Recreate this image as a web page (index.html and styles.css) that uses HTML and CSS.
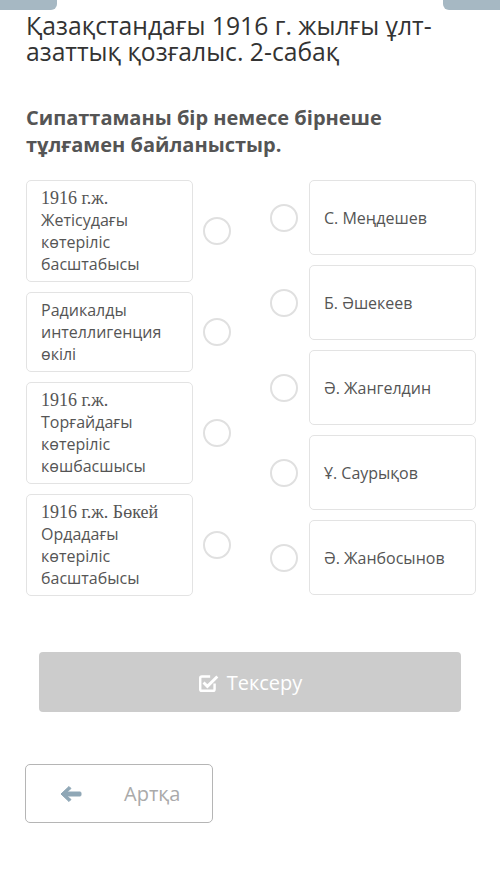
FILE: index.html
```html
<!DOCTYPE html>
<html lang="kk">
    <head>
        <title>Тест</title>
        <meta charset="utf-8" />
        <meta name="viewport" content="width=device-width, initial-scale=1">
        <link rel="stylesheet" href="styles.css">
    </head>
    <body>
        <div class="tabs">
            <span class="tab tab-left"></span>
            <span class="tab tab-right"></span>
        </div>
        <h1 class="title">Қазақстандағы 1916 г. жылғы ұлт-азаттық қозғалыс. 2-сабақ</h1>
        <h2 class="task">Сипаттаманы бір немесе бірнеше тұлғамен байланыстыр.</h2>

        <div class="match">
            <div class="col col-left">
                <div class="row">
                    <div class="card card-left"><span class="serif">1916 г.ж.</span> Жетісудағы көтеріліс басштабысы</div>
                    <span class="dot"></span>
                </div>
                <div class="row">
                    <div class="card card-left">Радикалды интеллигенция өкілі</div>
                    <span class="dot"></span>
                </div>
                <div class="row">
                    <div class="card card-left"><span class="serif">1916 г.ж.</span> Торғайдағы көтеріліс көшбасшысы</div>
                    <span class="dot"></span>
                </div>
                <div class="row">
                    <div class="card card-left"><span class="serif">1916 г.ж. Бөкей</span> Ордадағы көтеріліс басштабысы</div>
                    <span class="dot"></span>
                </div>
            </div>
            <div class="col col-right">
                <div class="row">
                    <span class="dot"></span>
                    <div class="card card-right">С. Меңдешев</div>
                </div>
                <div class="row">
                    <span class="dot"></span>
                    <div class="card card-right">Б. Әшекеев</div>
                </div>
                <div class="row">
                    <span class="dot"></span>
                    <div class="card card-right">Ә. Жангелдин</div>
                </div>
                <div class="row">
                    <span class="dot"></span>
                    <div class="card card-right">Ұ. Саурықов</div>
                </div>
                <div class="row">
                    <span class="dot"></span>
                    <div class="card card-right">Ә. Жанбосынов</div>
                </div>
            </div>
        </div>

        <button class="check" type="button">
            <svg width="21" height="21" viewBox="0 0 19 19">
                <path d="M15 10.5 V15.5 Q15 17 13.5 17 H3.5 Q2 17 2 15.5 V5.5 Q2 4 3.5 4 H11" fill="none" stroke="white" stroke-width="2.2"/>
                <path d="M5 9.5 L8.5 13 L17.5 4" fill="none" stroke="white" stroke-width="2.6"/>
            </svg>
            Тексеру
        </button>

        <button class="back" type="button">
            <svg width="22" height="18" viewBox="0 0 22 18">
                <path d="M1 9 L9 1.5 L11 3.5 L7 7 H20 Q21 7 21 8 V10 Q21 11 20 11 H7 L11 14.5 L9 16.5 Z" fill="#8fa7b6" stroke="#8fa7b6" stroke-width="1" stroke-linejoin="round"/>
            </svg>
            <span>Артқа</span>
        </button>
    </body>
</html>
```

FILE: styles.css
```css
body {
    margin: 0;
    background-color: white;
    font-family: "Open Sans", "Noto Sans", sans-serif;
    color: #444;
}
.tabs { display: flex; justify-content: space-between; }
.tab { width: 57px; height: 10px; background-color: #a6b8c3; }
.tab-left { border-bottom-right-radius: 6px; }
.tab-right { border-bottom-left-radius: 6px; }

.title {
    margin: 3px 0 0 26px;
    font-size: 24.7px;
    font-weight: normal;
    line-height: 26px;
    color: #333;
    width: 430px;
}
.task {
    margin: 39px 0 0 26px;
    font-size: 20px;
    font-weight: bold;
    line-height: 27px;
    color: #555;
    width: 400px;
}

.match {
    display: flex;
    gap: 39px;
    margin: 22px 0 0 26px;
}
.col { display: flex; flex-direction: column; gap: 10px; }
.row { display: flex; align-items: center; gap: 10px; }
.col-right .row { gap: 11px; }

.card {
    box-sizing: border-box;
    width: 167px;
    border: 1px solid #e3e3e3;
    border-radius: 5px;
    font-size: 16px;
    color: #555;
}
.card-left { padding: 6px 14px; line-height: 22px; }
.card-right { height: 75px; padding: 0 14px; display: flex; align-items: center; }
.serif { font-family: "Liberation Serif", serif; font-size: 18px; }

.dot {
    box-sizing: border-box;
    width: 28px;
    height: 28px;
    border: 2px solid #e0e0e0;
    border-radius: 50%;
}

.check {
    display: flex;
    align-items: center;
    justify-content: center;
    gap: 8px;
    margin: 56px 0 0 39px;
    width: 422px;
    height: 60px;
    border: 0;
    border-radius: 4px;
    background-color: #cccccc;
    color: white;
    font-family: "Open Sans", sans-serif;
    font-size: 20px;
}
.back {
    display: flex;
    align-items: center;
    margin: 52px 0 0 25px;
    width: 188px;
    height: 59px;
    padding: 0 0 0 34px;
    border: 1px solid #b5b5b5;
    border-radius: 5px;
    background-color: white;
    color: #aaa;
    font-family: "Open Sans", sans-serif;
    font-size: 20px;
}
.back span { margin-left: 42px; }
```
